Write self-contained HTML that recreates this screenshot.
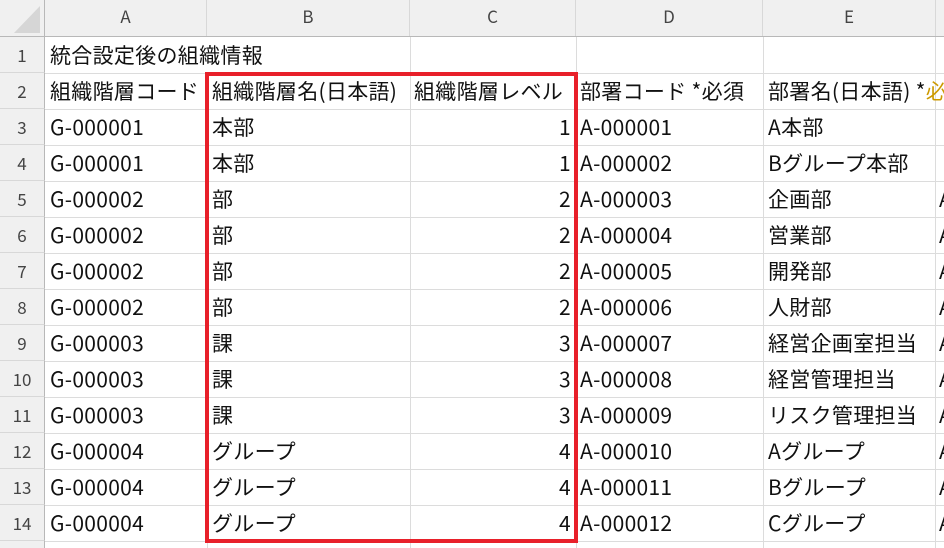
<!DOCTYPE html>
<html><head><meta charset="utf-8"><style>
html,body{margin:0;padding:0;width:944px;height:548px;overflow:hidden;background:#fff;}
body{position:relative;font-family:"Noto Sans CJK JP","Liberation Sans",sans-serif;}
.hdr{position:absolute;top:0;height:37px;background:#f0f0f0;border-bottom:1px solid #b8b8b8;box-sizing:border-box;}
.ch{position:absolute;top:0;height:36px;line-height:32px;text-align:center;font-size:17px;color:#444;border-right:1px solid #d8d8d8;box-sizing:border-box;}
.rh{position:absolute;left:0;width:45px;height:36px;background:#f0f0f0;border-right:1px solid #b8b8b8;border-bottom:1px solid #d8d8d8;box-sizing:border-box;text-align:center;line-height:36px;font-size:17px;color:#444;}
.vl{position:absolute;top:37px;bottom:0;width:1px;background:#dcdcdc;}
.hl{position:absolute;left:45px;right:0;height:1px;background:#dcdcdc;}
.t{position:absolute;font-size:21px;line-height:36px;height:36px;color:#111;white-space:nowrap;letter-spacing:0.3px;}
.r{text-align:right;}
</style></head><body>
<div class="hdr" style="left:0;width:944px"></div>
<div class="ch" style="left:0;width:45px;border-right:1px solid #b8b8b8"><svg width="45" height="36" style="position:absolute;left:0;top:0"><polygon points="40,6 40,33 14,33" fill="#d6d6d6"/></svg></div>
<div class="ch" style="left:45px;width:162px">A</div>
<div class="ch" style="left:207px;width:203px">B</div>
<div class="ch" style="left:410px;width:166px">C</div>
<div class="ch" style="left:576px;width:187px">D</div>
<div class="ch" style="left:763px;width:173px">E</div>
<div class="vl" style="left:207px"></div>
<div class="vl" style="left:410px"></div>
<div class="vl" style="left:576px"></div>
<div class="vl" style="left:763px"></div>
<div class="vl" style="left:935px"></div>
<div class="rh" style="top:37px">1</div><div class="hl" style="top:73px"></div>
<div class="rh" style="top:73px">2</div><div class="hl" style="top:109px"></div>
<div class="rh" style="top:109px">3</div><div class="hl" style="top:145px"></div>
<div class="rh" style="top:145px">4</div><div class="hl" style="top:181px"></div>
<div class="rh" style="top:181px">5</div><div class="hl" style="top:217px"></div>
<div class="rh" style="top:217px">6</div><div class="hl" style="top:253px"></div>
<div class="rh" style="top:253px">7</div><div class="hl" style="top:289px"></div>
<div class="rh" style="top:289px">8</div><div class="hl" style="top:325px"></div>
<div class="rh" style="top:325px">9</div><div class="hl" style="top:361px"></div>
<div class="rh" style="top:361px">10</div><div class="hl" style="top:397px"></div>
<div class="rh" style="top:397px">11</div><div class="hl" style="top:433px"></div>
<div class="rh" style="top:433px">12</div><div class="hl" style="top:469px"></div>
<div class="rh" style="top:469px">13</div><div class="hl" style="top:505px"></div>
<div class="rh" style="top:505px">14</div><div class="hl" style="top:541px"></div>
<div class="rh" style="top:541px;height:7px;border-bottom:none"></div>
<div style="position:absolute;left:45px;top:37px;width:364px;height:35px;background:#fff"></div>

<div class="t" style="left:50px;top:37px">統合設定後の組織情報</div>
<div class="t" style="left:50px;top:73px;width:156px;overflow:hidden">組織階層コード</div>
<div class="t" style="left:212px;top:73px">組織階層名(日本語)</div>
<div class="t" style="left:414px;top:73px;width:160px;overflow:hidden">組織階層レベル</div>
<div class="t" style="left:580px;top:73px">部署コード *必須</div>
<div class="t" style="left:768px;top:73px">部署名(日本語) *<span style="color:#c90">必</span></div>

<div class="t" style="left:50px;top:109px">G-000001</div><div class="t" style="left:212px;top:109px">本部</div><div class="t r" style="left:410px;width:161px;top:109px">1</div><div class="t" style="left:580px;top:109px">A-000001</div><div class="t" style="left:768px;top:109px">A本部</div>
<div class="t" style="left:50px;top:145px">G-000001</div><div class="t" style="left:212px;top:145px">本部</div><div class="t r" style="left:410px;width:161px;top:145px">1</div><div class="t" style="left:580px;top:145px">A-000002</div><div class="t" style="left:768px;top:145px">Bグループ本部</div>
<div class="t" style="left:50px;top:181px">G-000002</div><div class="t" style="left:212px;top:181px">部</div><div class="t r" style="left:410px;width:161px;top:181px">2</div><div class="t" style="left:580px;top:181px">A-000003</div><div class="t" style="left:768px;top:181px">企画部</div>
<div class="t" style="left:50px;top:217px">G-000002</div><div class="t" style="left:212px;top:217px">部</div><div class="t r" style="left:410px;width:161px;top:217px">2</div><div class="t" style="left:580px;top:217px">A-000004</div><div class="t" style="left:768px;top:217px">営業部</div>
<div class="t" style="left:50px;top:253px">G-000002</div><div class="t" style="left:212px;top:253px">部</div><div class="t r" style="left:410px;width:161px;top:253px">2</div><div class="t" style="left:580px;top:253px">A-000005</div><div class="t" style="left:768px;top:253px">開発部</div>
<div class="t" style="left:50px;top:289px">G-000002</div><div class="t" style="left:212px;top:289px">部</div><div class="t r" style="left:410px;width:161px;top:289px">2</div><div class="t" style="left:580px;top:289px">A-000006</div><div class="t" style="left:768px;top:289px">人財部</div>
<div class="t" style="left:50px;top:325px">G-000003</div><div class="t" style="left:212px;top:325px">課</div><div class="t r" style="left:410px;width:161px;top:325px">3</div><div class="t" style="left:580px;top:325px">A-000007</div><div class="t" style="left:768px;top:325px">経営企画室担当</div>
<div class="t" style="left:50px;top:361px">G-000003</div><div class="t" style="left:212px;top:361px">課</div><div class="t r" style="left:410px;width:161px;top:361px">3</div><div class="t" style="left:580px;top:361px">A-000008</div><div class="t" style="left:768px;top:361px">経営管理担当</div>
<div class="t" style="left:50px;top:397px">G-000003</div><div class="t" style="left:212px;top:397px">課</div><div class="t r" style="left:410px;width:161px;top:397px">3</div><div class="t" style="left:580px;top:397px">A-000009</div><div class="t" style="left:768px;top:397px">リスク管理担当</div>
<div class="t" style="left:50px;top:433px">G-000004</div><div class="t" style="left:212px;top:433px">グループ</div><div class="t r" style="left:410px;width:161px;top:433px">4</div><div class="t" style="left:580px;top:433px">A-000010</div><div class="t" style="left:768px;top:433px">Aグループ</div>
<div class="t" style="left:50px;top:469px">G-000004</div><div class="t" style="left:212px;top:469px">グループ</div><div class="t r" style="left:410px;width:161px;top:469px">4</div><div class="t" style="left:580px;top:469px">A-000011</div><div class="t" style="left:768px;top:469px">Bグループ</div>
<div class="t" style="left:50px;top:505px">G-000004</div><div class="t" style="left:212px;top:505px">グループ</div><div class="t r" style="left:410px;width:161px;top:505px">4</div><div class="t" style="left:580px;top:505px">A-000012</div><div class="t" style="left:768px;top:505px">Cグループ</div>

<div class="t" style="left:939px;top:181px">A</div><div class="t" style="left:939px;top:217px">A</div><div class="t" style="left:939px;top:253px">A</div><div class="t" style="left:939px;top:289px">A</div><div class="t" style="left:939px;top:325px">A</div><div class="t" style="left:939px;top:361px">A</div><div class="t" style="left:939px;top:397px">A</div><div class="t" style="left:939px;top:433px">A</div><div class="t" style="left:939px;top:469px">A</div><div class="t" style="left:939px;top:505px">A</div>

<div style="position:absolute;left:205px;top:72px;width:365px;height:463px;border:4px solid #e8202a"></div>
</body></html>
